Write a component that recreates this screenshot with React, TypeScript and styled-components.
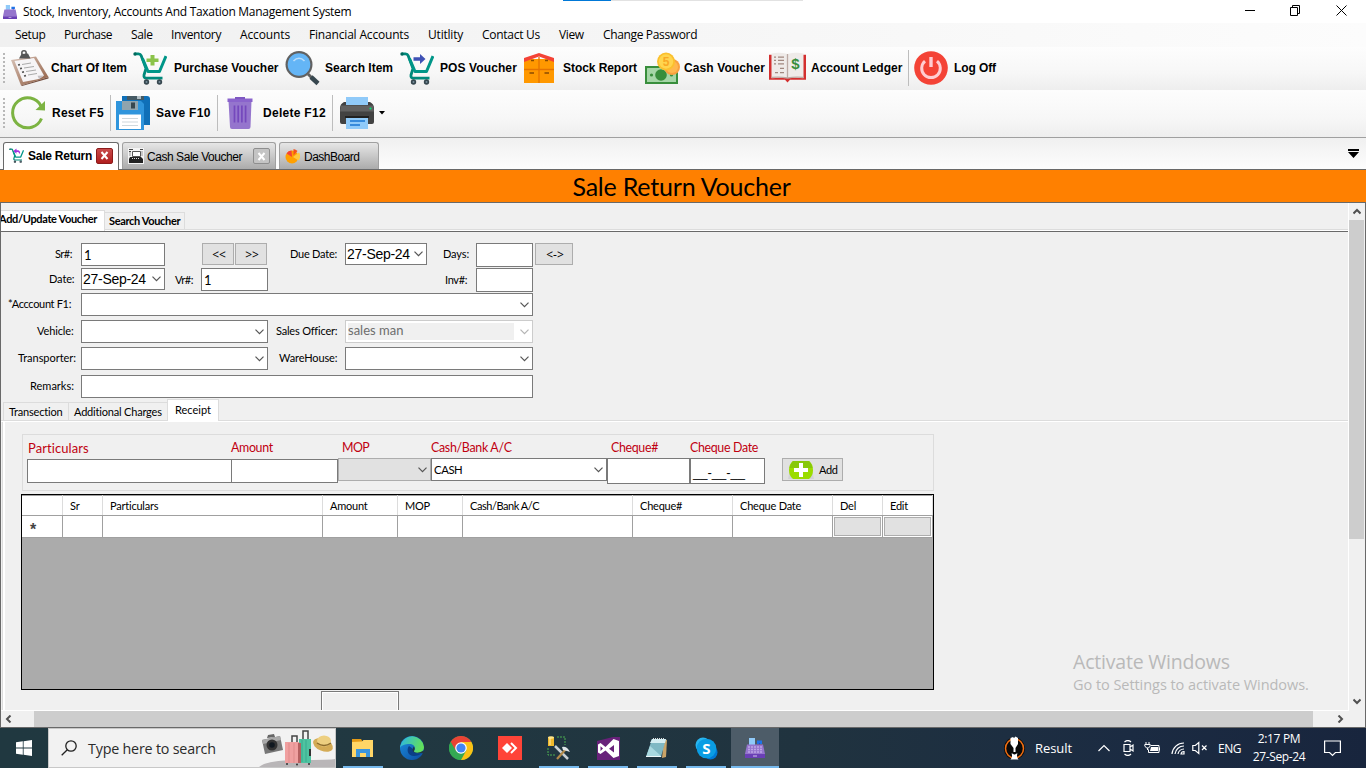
import React from 'react';
import styled, { createGlobalStyle, css } from 'styled-components';

const ui = '"Open Sans", "Noto Sans", sans-serif';
const sans = '"Liberation Sans", Arial, sans-serif';
const lato = 'Lato, "Open Sans", sans-serif';

const Global = createGlobalStyle`
  * { box-sizing: border-box; }
  html, body { margin: 0; padding: 0; }
  body { width: 1366px; height: 768px; overflow: hidden; background: #f0f0f0; color: #000; }
  svg { display: block; flex: none; }
`;

const Screen = styled.div`
  position: relative;
  display: flex;
  flex-direction: column;
  width: 1366px;
  height: 768px;
  overflow: hidden;
  background: #f0f0f0;
  font: 12px ${ui};
  white-space: nowrap;
`;

/* ---------- window frame ---------- */
const TitleBar = styled.header`
  position: relative;
  display: flex;
  align-items: center;
  height: 23px;
  padding-left: 3px;
  background: #fff;
  font-size: 12px;
  letter-spacing: -0.28px;
`;
const AppName = styled.span`
  flex: 1;
  margin-left: 6px;
  line-height: 23px;
`;
const TopLoader = styled.div`
  position: absolute;
  top: 0;
  left: 563px;
  width: 240px;
  height: 1px;
  background: linear-gradient(90deg, #0078d7 48px, #e2e2e2 48px);
`;
const WindowButtons = styled.div`
  display: flex;
  width: 128px;
  align-items: center;
  justify-content: space-between;
  padding: 0 19px 2px 7px;
`;
const MenuBar = styled.nav`
  display: flex;
  height: 24px;
  padding-left: 15px;
  background: linear-gradient(90deg, #f0f0f0, #fcfcfc);
`;
const MenuItem = styled.span<{ $w: number; $ls?: number }>`
  width: ${p => p.$w}px;
  line-height: 23px;
  letter-spacing: ${p => p.$ls ?? -0.35}px;
`;

/* ---------- toolbars ---------- */
const Toolbar = styled.div<{ $h: number }>`
  display: flex;
  align-items: center;
  height: ${p => p.$h}px;
  padding-left: 3px;
  padding-bottom: 1px;
  background: linear-gradient(#fdfdfd, #f7f7f7 60%, #eeeeee);
`;
const Grip = styled.div`
  width: 2px;
  height: 31px;
  margin-right: 6px;
  background: repeating-linear-gradient(#b8b8b8 0 2px, transparent 2px 4px);
`;
const ToolButton = styled.div<{ $w: number }>`
  display: flex;
  align-items: center;
  width: ${p => p.$w}px;
`;
const ToolIcon = styled.div<{ $w: number }>`
  width: ${p => p.$w}px;
`;
const ToolLabel = styled.span<{ $ls?: number }>`
  padding-bottom: 1px;
  font: 700 12px ${sans};
  letter-spacing: ${p => p.$ls ?? 0}px;
`;
const Separator = styled.i`
  width: 1px;
  height: 36px;
  margin-right: 5px;
  background: #bdbdbd;
`;

/* ---------- document tabs ---------- */
const DocTabs = styled.div`
  display: flex;
  align-items: flex-end;
  height: 33px;
  padding-left: 3px;
  gap: 3px;
  border-top: 1px solid #a0a0a0;
  border-bottom: 1px solid #696969;
  background: linear-gradient(#f0f0f0, #fdfdfd);
`;
const DocTab = styled.div<{ $w: number; $active?: boolean }>`
  display: flex;
  align-items: center;
  width: ${p => p.$w}px;
  height: 27px;
  padding: 0 5px 0 5px;
  border: 1px solid ${p => (p.$active ? '#696969' : '#a0a0a0')};
  border-bottom: 0;
  border-radius: 3px 3px 0 0;
  background: ${p => (p.$active ? '#fff' : 'linear-gradient(#e6e6e6, #ababab)')};
  ${p => p.$active && css`margin-bottom: -1px; height: 28px; padding-bottom: 2px;`}
`;
const DocTabName = styled.span<{ $bold?: boolean; $ls: number }>`
  flex: 1;
  margin-left: ${p => (p.$ls === -0.45 ? 3 : 4)}px;
  padding-top: 1px;
  font: ${p => (p.$bold ? 700 : 400)} 12px ${sans};
  letter-spacing: ${p => p.$ls}px;
`;
const TabClose = styled.span<{ $red?: boolean }>`
  display: flex;
  align-items: center;
  justify-content: center;
  width: 17px;
  height: 16px;
  border: 1px solid ${p => (p.$red ? '#8c1c1c' : '#8e8e8e')};
  border-radius: 2px;
  background: ${p => (p.$red ? 'linear-gradient(#c94b4b, #b01e1e)' : '#c4c4c4')};
`;
const TabMenu = styled.div`
  margin: 0 7px 11px auto;
`;
const Banner = styled.h1`
  height: 33px;
  margin: 0;
  border-bottom: 1px solid #696969;
  background: #ff8000;
  font: 400 25px/33px ${lato};
  letter-spacing: -0.21px;
  text-align: center;
  text-indent: -3px;
`;

/* ---------- scrolling work area ---------- */
const WorkArea = styled.div`
  display: flex;
  height: 525px;
  border: solid #696969;
  border-width: 0 1px 1px;
`;
const WorkColumn = styled.div`
  display: flex;
  flex: 1;
  flex-direction: column;
  min-width: 0;
`;
const Page = styled.div`
  height: 508px;
  overflow: hidden;
  border: solid #fff;
  border-width: 0 1px 1px 0;
`;
const ScrollDown = styled.div`
  display: flex;
  flex-direction: column;
  align-items: center;
  width: 16px;
  padding: 5px 1px 22px 0;
`;
const VThumb = styled.div`
  width: 15px;
  height: 319px;
  margin: 4px 0 auto;
  background: #cdcdcd;
`;
const ScrollAcross = styled.div`
  display: flex;
  align-items: center;
  height: 16px;
  padding: 0 5px 0 4px;
`;
const HThumb = styled.div`
  width: 1279px;
  height: 16px;
  margin: 0 auto 0 21px;
  background: #cdcdcd;
`;

const PageTabs = styled.div`
  display: flex;
  align-items: flex-end;
  height: 29px;
  border-bottom: 1px solid #696969;
  background: linear-gradient(transparent 26px, #dcdcdc 26px 27px, #fff 27px);
`;
const PageTab = styled.div<{ $active?: boolean }>`
  height: ${p => (p.$active ? 21 : 18)}px;
  width: ${p => (p.$active ? 104 : 80)}px;
  margin-bottom: ${p => (p.$active ? 0 : 1)}px;
  padding-left: ${p => (p.$active ? 0 : 4)}px;
  border: 1px solid #dcdcdc;
  border-left: 0;
  background: ${p => (p.$active ? '#fff' : '#f0f0f0')};
  border-bottom: ${p => (p.$active ? '0' : '1px solid #dcdcdc')};
  font: 700 11px/${p => (p.$active ? 16 : 16)}px ${lato};
  letter-spacing: -0.34px;
  text-indent: ${p => (p.$active ? -2 : 0)}px;
`;

const Form = styled.div`
  height: 166px;
  padding-top: 11px;
`;
const FormRow = styled.div<{ $h: number }>`
  display: flex;
  align-items: flex-start;
  height: ${p => p.$h}px;
`;
const Label = styled.label<{ $w: number; $ml: number; $ls?: number; $lh?: number }>`
  width: ${p => p.$w}px;
  margin-left: ${p => p.$ml}px;
  font: 11px/${p => p.$lh ?? 22}px ${lato};
  letter-spacing: ${p => p.$ls ?? -0.12}px;
`;
const Field = styled.div<{ $w: number; $h?: number; $disabled?: boolean }>`
  display: flex;
  flex: none;
  align-items: center;
  width: ${p => p.$w}px;
  height: ${p => p.$h ?? 23}px;
  padding: 0 3px 0 2px;
  border: 1px solid ${p => (p.$disabled ? '#cccccc' : '#7a7a7a')};
  background: #fff;
  font: 13px ${lato};
`;
const DateText = styled.span`
  flex: 1;
  margin-left: -1px;
  font: 14px ${sans};
  letter-spacing: -0.28px;
`;
const FieldText = styled.span`
  flex: 1;
`;
const DisabledText = styled.span`
  flex: 1;
  height: 17px;
  margin: 0 6px 0 0;
  background: #f0f0f0;
  color: #6d6d6d;
  line-height: 15px;
`;
const Button = styled.div<{ $w: number; $ml?: number }>`
  display: flex;
  align-items: center;
  justify-content: center;
  width: ${p => p.$w}px;
  height: 22px;
  margin-left: ${p => p.$ml ?? 0}px;
  border: 1px solid #adadad;
  background: #e1e1e1;
`;
const ArrowLabel = styled.span`
  padding: 1px 0 0 2px;
  font: 12px ${ui};
`;

const SubTabs = styled.div`
  display: flex;
  align-items: flex-end;
  height: 24px;
  padding-left: 2px;
  background: linear-gradient(transparent 22px, #dcdcdc 22px 23px, #fff 23px);
`;
const SubTab = styled.div<{ $w: number; $active?: boolean }>`
  width: ${p => p.$w}px;
  height: ${p => (p.$active ? 22 : 18)}px;
  margin-bottom: ${p => (p.$active ? 1 : 2)}px;
  padding-left: ${p => (p.$active ? 7 : 5)}px;
  border: 1px solid #dcdcdc;
  border-bottom: 0;
  border-right-width: ${p => (p.$active ? 1 : 0)}px;
  background: ${p => (p.$active ? '#fff' : '#f0f0f0')};
  font: 11px/${p => (p.$active ? 19 : 17)}px ${lato};
  letter-spacing: ${p => (p.$active ? 0 : -0.19)}px;
`;
const ReceiptPane = styled.div`
  height: 290px;
  margin-left: 1px;
  padding: 12px 0 0 17px;
  border-left: 1px solid #dcdcdc;
  box-shadow: inset 2px 0 #fff;
`;
const EntryBox = styled.div`
  display: flex;
  width: 912px;
  height: 57px;
  margin-left: 2px;
  padding-left: 4px;
  border: 1px solid #dcdcdc;
`;
const EntryColumn = styled.div<{ $w: number }>`
  width: ${p => p.$w}px;
`;
const EntryLabel = styled.div<{ $in?: number; $ls: number; $low?: boolean }>`
  height: ${p => (p.$low ? 24 : 23)}px;
  padding-left: ${p => p.$in ?? 0}px;
  color: #c00010;
  font: ${p => (p.$ls < 0 ? 12.4 : 13)}px/26px ${lato};
  letter-spacing: ${p => p.$ls}px;
`;
const MopSelect = styled(Field)`
  border-color: #adadad;
  background: #e1e1e1;
`;
const CashText = styled.span`
  flex: 1;
  font-size: 11.3px;
  letter-spacing: -0.4px;
  padding-bottom: 1px;
`;
const MaskText = styled.span`
  padding-top: 2px;
  font: 13px ${sans};
`;
const AddButton = styled(Button)`
  margin: 23px 0 0 17px;
  height: 23px;
  justify-content: flex-start;
  padding-left: 5px;
  gap: 5px;
  font: 11px ${lato};
  letter-spacing: -0.4px;
`;
const DataGrid = styled.div`
  width: 913px;
  height: 196px;
  margin: 3px 0 0 1px;
  border: 1px solid #000;
  background: #ababab;
`;
const GridRow = styled.div<{ $head?: boolean }>`
  display: grid;
  grid-template-columns: 41px 40px 220px 75px 65px 170px 100px 100px 50px 50px;
  grid-template-rows: 100%;
  height: ${p => (p.$head ? 21 : 22)}px;
  border-bottom: 1px solid #a0a0a0;
  background: #fff;
  ${p => p.$head && css`box-shadow: inset 0 1px #a0a0a0;`}
`;
const HeadCell = styled.div<{ $tight?: boolean }>`
  padding-left: 7px;
  border-right: 1px solid #dcdcdc;
  font: 11px/21px ${lato};
  letter-spacing: ${p => (p.$tight ? -0.45 : -0.22)}px;
`;
const Cell = styled.div`
  display: flex;
  padding: 1px;
  border-right: 1px solid #a0a0a0;
`;
const CellButton = styled.div`
  flex: 1;
  border: 1px solid #adadad;
  background: #e1e1e1;
`;
const NewRowMark = styled.span`
  padding: 4px 0 0 7px;
  font: 700 16px/18px ${sans};
  color: #444;
`;
const TotalBox = styled.div`
  width: 78px;
  height: 24px;
  margin: 1px 0 0 301px;
  border: 1px solid #7a7a7a;
  box-shadow: inset 0 0 0 1px #fff;
`;

/* ---------- watermark & taskbar ---------- */
const Watermark = styled.div`
  position: absolute;
  left: 1073px;
  top: 648px;
  color: #b9b9b9;
  font-family: ${ui};
`;
const WatermarkTitle = styled.div`
  font-size: 19.5px;
  line-height: 28px;
  letter-spacing: -0.2px;
`;
const WatermarkText = styled.div`
  font-size: 14.5px;
  line-height: 18px;
  letter-spacing: -0.05px;
`;
const Taskbar = styled.footer`
  display: flex;
  height: 40px;
  background: linear-gradient(90deg, #203840 0, #213841 400px, #20333f 800px, #1b2b42 1130px, #18253d);
  color: #fff;
`;
const StartButton = styled.div`
  display: flex;
  align-items: center;
  justify-content: center;
  width: 48px;
`;
const SearchBox = styled.div`
  display: flex;
  align-items: center;
  width: 288px;
  padding-left: 12px;
  border: 1px solid #c8c8c8;
  background: #f2f2f2;
  color: #2b2b2b;
  font-size: 14.3px;
  letter-spacing: -0.2px;
`;
const SearchHint = styled.span`
  flex: 1;
  margin-left: 11px;
`;
const TaskIcons = styled.div`
  display: flex;
  gap: 1px;
  margin-left: 3px;
`;
const TaskButton = styled.div<{ $open?: boolean; $active?: boolean }>`
  display: flex;
  align-items: center;
  justify-content: center;
  width: 48px;
  background-color: ${p => (p.$active ? '#4d5c68' : 'transparent')};
  background-image: ${p => (p.$open || p.$active ? 'linear-gradient(#76b9ed, #76b9ed)' : 'none')};
  background-repeat: no-repeat;
  background-position: center bottom;
  background-size: ${p => (p.$active ? '48px' : '40px')} 2px;
`;
const Tray = styled.div`
  display: flex;
  align-items: center;
  width: 362px;
  margin-left: auto;
`;
const TrayText = styled.span<{ $w: number; $ls?: number; $size?: number }>`
  width: ${p => p.$w}px;
  font-size: ${p => p.$size ?? 12}px;
  letter-spacing: ${p => p.$ls ?? -0.45}px;
`;
const TrayIcon = styled.span<{ $w: number }>`
  width: ${p => p.$w}px;
`;
const Clock = styled.div`
  width: 66px;
  margin-right: 12px;
  font-size: 12px;
  line-height: 18px;
  letter-spacing: -0.35px;
  text-align: center;
`;

/* ---------- icons ---------- */
const Chevron = ({ c = '#555' }: { c?: string }) => (
  <svg width="9" height="6" viewBox="0 0 9 6"><path d="M.5.7 4.500 4.700 8.500.7" fill="none" stroke={c} strokeWidth="1.200" /></svg>
);
const ScrollArrow = ({ d }: { d: string }) => (
  <svg width="8" height="8" viewBox="0 0 8 8"><path d={d} fill="none" stroke="#505050" strokeWidth="2" /></svg>
);
const Register = ({ s, keys = true }: { s: number; keys?: boolean }) => (
  <svg width={s} height={s} viewBox="0 0 20 20">
    <path d="M4 0h6v7H4z" fill="#90caf9" /><path d="M12 2.500h5v3.500h-5z" fill="#1e73e8" /><path d="M14 5.500h1V8h-1z" fill="#4527a0" />
    <path d="M2 6.500h16l2 9.500H0z" fill="#9575cd" /><path d="M0 16h20v4H0z" fill="#6a3fb5" />
    {keys && <path d="M3 9h14M3 11.500h14M3 14h14" stroke="#bda5e6" strokeWidth="1.300" strokeDasharray="2 1" />}
    <path d="M8 17.500h4v1H8z" fill="#d1c4e9" />
  </svg>
);
const Clipboard = () => (
  <svg width="38" height="36" viewBox="0 0 38 36">
    <defs><linearGradient id="wood" x1="0" y1="0" x2="1" y2="1"><stop offset="0" stopColor="#d8c3b8" /><stop offset="1" stopColor="#8f5b3f" /></linearGradient></defs>
    <path d="M0 10 25 6.500 37.500 27 10 35.500z" fill="url(#wood)" /><path d="M10 35.500 37.500 27v1.500L11 36z" fill="#765040" />
    <path d="M3.500 11 23 8 33 25.500 28 29 12 32z" fill="#f6f4f6" /><path d="M28 29 26.500 25.800 33 25.500z" fill="#c5c0c4" />
    <path d="M8 8.500 10.500 4 17 3.500 19.500 8.500z" fill="#555" /><circle cx="13" cy="3" r="2.200" fill="none" stroke="#555" strokeWidth="1.500" />
    <path d="m11 14.500 9-1.500M13 18l10-1.500M15 21.500l10-1.500M17 25l9-1.500" stroke="#aaa" strokeWidth="1" />
    <path d="m7 15 2-.4M9 18.600l2-.4M11 22.300l2-.4M13 26l2-.4" stroke="#555" strokeWidth="1.600" />
  </svg>
);
const Cart = ({ kind, s = 34 }: { kind: 'plus' | 'arrow' | 'return'; s?: number }) => (
  <svg width={s} height={s} viewBox="0 0 34 34">
    <path d="M2 2.800H5.500q2 0 2.600 1.700L13 17.500 11 24q-.5 3 2.500 3.200h16" fill="none" stroke="#00897b" strokeWidth="2.800" strokeLinejoin="round" />
    <path d="M9.500 7.500 15 20.500h11.500L33 5" fill="none" stroke="#009688" strokeWidth="3" strokeLinejoin="round" />
    <circle cx="2" cy="3" r="1.700" fill="#00695c" />
    <circle cx="13.500" cy="31" r="2.700" fill="#37474f" /><circle cx="26.500" cy="31" r="2.700" fill="#37474f" /><circle cx="13.500" cy="31" r="1" fill="#78909c" /><circle cx="26.500" cy="31" r="1" fill="#78909c" />
    {kind === 'plus' && <path d="M17.500 4h4v3.500h4v3.500h-4v3.500h-4V11h-4V7.500h4z" fill="#8bc34a" />}
    {kind === 'arrow' && <path d="M13.500 6.300h6.500V3l5.500 5-5.500 5V9.700h-6.500z" fill="#3f51b5" />}
    {kind === 'return' && <path d="M25 14c1-8-2-9-8-9V1l-7 6 7 6V9c4 0 5 0 8 5z" fill="#a030e0" />}
  </svg>
);
const Magnifier = () => (
  <svg width="36" height="36" viewBox="0 0 36 36">
    <path d="m23 24 4 4" stroke="#616161" strokeWidth="3" /><path d="m26 27 7 6.500" stroke="#37474f" strokeWidth="4.500" />
    <circle cx="14" cy="14.500" r="13.500" fill="#616161" /><circle cx="14" cy="14.500" r="11.300" fill="#64b5f6" /><path d="M8.500 11q5.500-5.500 11 0" fill="none" stroke="#bbdefb" strokeWidth="1.600" />
  </svg>
);
const Boxes = () => (
  <svg width="32" height="34" viewBox="0 0 32 34">
    <path d="M0 8h30v24H0z" fill="#ff9800" /><path d="M0 7 15 2l15 5v4L15 5.500 0 11z" fill="#f44336" />
    <path d="M15 6v26M0 18.500h30" stroke="#e57300" strokeWidth="1.300" /><path d="M5.500 22h4.500M20.500 22H25M7 9.500h3M21 9.500h3" stroke="#8a4b00" strokeWidth="1.500" />
  </svg>
);
const Money = () => (
  <svg width="37" height="34" viewBox="0 0 37 34">
    <path d="M1 15h33v18H1z" fill="#388e3c" /><path d="M3 17h29v14H3z" fill="#a5d6a7" /><path d="M1 15h5l-5 4zM34 33v-4l-4 4zM1 33v-4l4 4z" fill="#388e3c" />
    <circle cx="17" cy="24" r="5.800" fill="#388e3c" /><circle cx="7.500" cy="24" r="1.600" fill="#388e3c" /><circle cx="27.500" cy="24" r="1.600" fill="#388e3c" />
    <circle cx="28" cy="16" r="8" fill="#f9a03f" /><circle cx="28" cy="16" r="6" fill="#ffb74d" /><circle cx="22" cy="10.500" r="9" fill="#fbc02d" /><circle cx="22" cy="10.500" r="7.200" fill="#ffd54f" />
    <text x="22" y="14.700" fontFamily="Liberation Sans" fontWeight="700" fontSize="12" textAnchor="middle" fill="#f9a825">5</text>
  </svg>
);
const Ledger = () => (
  <svg width="38" height="32" viewBox="0 0 38 34" preserveAspectRatio="none">
    <path d="M0 3h37v26.500H21l-2.500 3-2.500-3H0z" fill="#d32f2f" /><path d="M2.500 1.500q8-1.500 16 .5 8-2 16-.5v26.300q-8-1-16 0-8-1-16 0z" fill="#efebe9" /><path d="M18.500 2v25.500M2.500 27q8-1 16 .5 8-1.500 16-.5" stroke="#bcaaa4" strokeWidth="1.300" fill="none" />
    <path d="M5 5.500h2M9 5.500h6M5 9h2M9 9h6M5 12.500h2M9 12.500h6M11 17.500h4M6 22h3M11 22h4" stroke="#a1887f" strokeWidth="1.300" />
    <text x="26.500" y="18" fontFamily="Liberation Sans" fontWeight="700" fontSize="15" textAnchor="middle" fill="#388e3c">$</text>
  </svg>
);
const Power = () => (
  <svg width="34" height="34" viewBox="0 0 34 34"><circle cx="17" cy="17" r="16.800" fill="#f44336" /><path d="M11 10.200a9.300 9.300 0 1 0 12 0" fill="none" stroke="#ffcdd2" strokeWidth="3" /><path d="M17 6v10" stroke="#ffcdd2" strokeWidth="3.400" /></svg>
);
const Reset = () => (
  <svg width="35" height="34" viewBox="0 0 35 34"><path d="M30 10A15 15 0 1 0 30.500 22.500" fill="none" stroke="#7cb342" strokeWidth="3" /><path d="m24.500 14 9.500.5V5z" fill="#7cb342" /></svg>
);
const Disks = () => (
  <svg width="34" height="34" viewBox="0 0 34 34">
    <path d="M6 0h25q3 0 3 3v26H6z" fill="#1070b8" /><path d="M11 0h17v4H11z" fill="#455a64" /><path d="M21 0h4v3h-4z" fill="#b0bec5" />
    <path d="M0 5h25l3 3v26H0z" fill="#2f95dc" /><path d="M6 5h16v9H6z" fill="#90a4ae" /><path d="M15 6.500h4v6h-4z" fill="#37474f" /><path d="M3 18.500h22V33H3z" fill="#fff" /><path d="M6 22.500h16M6 26h16M6 29.500h16" stroke="#cfd8dc" strokeWidth="1.200" />
  </svg>
);
const Trash = () => (
  <svg width="34" height="34" viewBox="0 0 34 34"><path d="M5.500 5h23L27.500 31q0 2-2 2H9q-2 0-2-2z" fill="#9575cd" /><path d="M4.500 2.500h25V6h-25z" fill="#8a63cc" /><path d="M12 1h10v2H12z" fill="#7e57c2" /><path d="M11.500 9.500v17M15.200 9.500v17M18.900 9.500v17M22.600 9.500v17" stroke="#7548bd" strokeWidth="1.700" /></svg>
);
const Printer = () => (
  <svg width="36" height="34" viewBox="0 0 36 34"><path d="M6 1h22v9H6z" fill="#90caf9" /><path d="M4 6h2v3h22V6h2q4 2 4 6v14q0 2-2 2H2q-2 0-2-2V12q0-4 4-6z" fill="#424242" /><path d="M1 9.500h32l1 6H0z" fill="#616161" /><path d="M5 20h24v2H5z" fill="#212121" /><path d="M6 22h22v11H6z" fill="#90caf9" /><path d="M10 25h15M10 29h10" stroke="#1976d2" strokeWidth="1.600" /><circle cx="30.500" cy="12.500" r="1.100" fill="#00e676" /></svg>
);
const CashRegister = () => (
  <svg width="16" height="16" viewBox="0 0 16 16"><path fill="#f4f4f4" d="M0 0h16v16H0z" /><path d="M1 1.500h4M12 1.500h3M1 3.500h2" stroke="#444" /><path d="M4.500 3.500h8v5h-8z" fill="#fff" stroke="#555" /><path d="M2 9h11l2 2v4H1v-4z" fill="#222" /><path d="M4 10.500h7" stroke="#ddd" strokeDasharray="1 1" /><path d="M2 4v4M14 3v5" stroke="#999" /></svg>
);
const Pie = () => (
  <svg width="15" height="15" viewBox="0 0 15 15"><circle cx="7" cy="8" r="6.500" fill="#ffa000" /><path d="M7 8 1.500 4.500A6.500 6.500 0 0 1 6.500 1.500z" fill="#f44336" /><path d="M8.500 6.500V0a6.500 6.500 0 0 1 4 2z" fill="#f4511e" /><path d="M8 8l6-4.500a7 7 0 0 1-.5 8z" fill="#ffc940" /></svg>
);
const Cross = () => (
  <svg width="9" height="9" viewBox="0 0 9 9"><path d="m1.500 1 6 7m0-7-6 7" stroke="#fff" strokeWidth="2" /></svg>
);
const PlusBadge = () => (
  <svg width="26" height="18" viewBox="0 0 26 18"><path fill="#d2d2d6" d="M0 18 4 0h18l4 18z" /><path d="M5 0h16q4 3 4 9t-4 9H5q-4-3-4-9t4-9z" fill="#9bdc00" /><path d="M5 0h16q3 3 3.500 7H1.500Q2 3 5 0z" fill="#87c80a" /><path d="M13 2v14M6 9h14" stroke="#fff" strokeWidth="4" /></svg>
);
const Luggage = () => (
  <svg width="76" height="38" viewBox="0 0 76 38">
    <path d="M0 38Q8 31 40 31t36-1v8z" fill="#b9b6b8" />
    <path d="m3 11 18-4 3 14-18 4z" fill="#777" /><path d="m3 11 18-4 1 4-18 4z" fill="#aaa" /><circle cx="13" cy="16" r="5.500" fill="#333" /><circle cx="13" cy="16" r="2.800" fill="#101820" /><path d="m8 9 1-3 6-1 1 3z" fill="#666" />
    <path d="M33 13V7h5v6M44 11V2h5v9" fill="none" stroke="#444" strokeWidth="1.500" />
    <path d="M40 10h12v24H40z" fill="#4fc3a1" /><path d="M43 11v22M47 11v22" stroke="#38ab8d" /><path d="M26 13h14v21H26z" fill="#f0a0a0" /><path d="M30 14v20M35 14v20" stroke="#e08b8b" /><path d="M39 14h3v20h-3z" fill="#b56060" /><path d="M51 20v7" stroke="#333" strokeWidth="2" />
    <ellipse cx="64" cy="16" rx="10.500" ry="6" transform="rotate(22 64 16)" fill="#d4ab55" /><ellipse cx="65" cy="12" rx="7" ry="5.500" fill="#edcf80" /><path d="M58 14q7 5 14 0" fill="none" stroke="#8b6b2c" strokeWidth="1.500" />
    <circle cx="28" cy="35" r="1" fill="#333" /><circle cx="38" cy="35.500" r="1" fill="#333" /><circle cx="50" cy="35" r="1" fill="#333" />
  </svg>
);
const Folder = () => (
  <svg width="22" height="20" viewBox="0 0 22 20"><path d="M0 1h9l2 3H0z" fill="#e59b17" /><path d="M0 4 10 3.500 11.500 2H21v17H0z" fill="#ffd667" /><path d="M4 11h14v8h-4v-4H8v4H4z" fill="#3a95dd" /></svg>
);
const Edge = () => (
  <svg width="24" height="24" viewBox="0 0 24 24">
    <defs><linearGradient id="sea" x1="0" y1="0" x2="1" y2=".3"><stop offset="0" stopColor="#2bb5e8" /><stop offset="1" stopColor="#62df5b" /></linearGradient><linearGradient id="deep" x1="0" y1="0" x2="1" y2="1"><stop offset="0" stopColor="#1b8fe0" /><stop offset="1" stopColor="#0c4a9e" /></linearGradient></defs>
    <circle cx="12" cy="12" r="12" fill="url(#deep)" /><path d="M.3 10A12 12 0 0 1 24 11c0 4-3 6-7 6-3 0-4-1.500-2.500-3 1.500-3-1-6-5-6S1 9 .3 12z" fill="url(#sea)" /><path d="M9 10c-3 4-1 10 5 10 3 0 6-1 8-3-3 1-9 1-9-4z" fill="#0b3f87" /><path d="M13.500 10.500c2 1.500 1 3.500.5 4.500-.5 1.500 4 3 9.500-.5l1 3-4-.5q-7 1-8-3z" fill="#213740" />
  </svg>
);
const Chrome = () => (
  <svg width="24" height="24" viewBox="0 0 24 24"><circle cx="12" cy="12" r="12" fill="#34a853" /><path d="M1.600 6A12 12 0 0 1 22.400 6H12v8z" fill="#ea4335" /><path d="M22.400 6A12 12 0 0 1 12 24l5.500-10L12 6z" fill="#fbc116" /><path d="M1.600 6 7 15l5-3z" fill="#ea4335" /><path d="m1.600 6 5.600 9.500L12 18l3-1-4 7A12 12 0 0 1 1.600 6z" fill="#34a853" /><circle cx="12" cy="12" r="5.800" fill="#fff" /><circle cx="12" cy="12" r="4.600" fill="#4285f4" /></svg>
);
const AnyDesk = () => (
  <svg width="24" height="24" viewBox="0 0 24 24"><path fill="#ff4438" d="M0 0h24v24H0z" /><path d="m9 7 5 5-5 5-5-5z" fill="#fff" /><path d="m13 7 5 5-5 5" fill="none" stroke="#fff" strokeWidth="2" /></svg>
);
const DbTools = () => (
  <svg width="24" height="24" viewBox="0 0 24 24"><path d="M1 1h6v9H1z" fill="#f0b92c" /><ellipse cx="4" cy="1.500" rx="3" ry="1.200" fill="#ffe58a" /><path d="M3 2v7" stroke="#ffeeb0" /><path d="M10 1h8v8M1 12v7h8" fill="none" stroke="#4caf50" strokeDasharray="2 1" /><path d="M8 10l13 13" stroke="#c9d0d6" strokeWidth="2.500" /><path d="m19 13-9 10" stroke="#b18a4a" strokeWidth="2.200" /><path d="M15 11q5-1 8 5l-3-1-4-1z" fill="#dfe5e8" /></svg>
);
const VisualStudio = () => (
  <svg width="23" height="23" viewBox="0 0 23 23"><path fill="#68217a" d="M0 4 16 0h7v23H0z" /><path fillRule="evenodd" d="M16.500 2 22 4v15l-5.500 2-8-7.500L3.500 17 1 15.500v-8L3.500 6l5 4zM17 8l-5 3.700 5 3.800zM3.500 9.300v4.600L6 11.600z" fill="#fff" /></svg>
);
const Notepad = () => (
  <svg width="24" height="24" viewBox="0 0 24 24"><path d="m19 3 3 1-1 17-4 1z" fill="#c9a468" /><path d="M7 3h14l-5 18H1z" fill="#7fb9c4" /><path d="M7 3h14l-1 4H5z" fill="#d4eef2" /><path d="M5 10 15 19l1 2H1z" fill="#a9d9e0" /><path d="M8 2.500h12" stroke="#ddd" strokeDasharray="1 1" strokeWidth="1" /><path d="M1 21h15l.3-1H1z" fill="#eef9fa" /></svg>
);
const Skype = () => (
  <svg width="23" height="23" viewBox="0 0 23 23"><circle cx="8" cy="8" r="7.500" fill="#29b6f0" /><circle cx="15.500" cy="15.500" r="7" fill="#0078d4" /><circle cx="11.500" cy="11.500" r="9.800" fill="#0a9de4" /><text x="11.500" y="17" fontSize="15" fontWeight="700" fontFamily="Open Sans" textAnchor="middle" fill="#fff">S</text></svg>
);
const Cricket = () => (
  <svg width="21" height="24" viewBox="0 0 21 24"><ellipse cx="10.500" cy="12.500" rx="10.500" ry="11" fill="#0a0a0a" /><ellipse cx="10.500" cy="12.500" rx="9" ry="9.700" fill="none" stroke="#f36f12" strokeWidth="1.500" /><path d="M6.500 2 9 1l1 1 1.500-1.500L14 2v6l-2.500 4v4h-2v-4L6.500 8z" fill="#fff" /><path d="M10 18.500q-1.500-1.500-2.500-1 1 2 0 4.500l-1 1.500h8l-1-1.500q-1-2.500 0-4.500-1-.5-2.500 1z" fill="#fff" /></svg>
);
const Line = ({ d, w, h = 16, sw = 1.2 }: { d: string; w: number; h?: number; sw?: number }) => (
  <svg width={w} height={h} viewBox={`0 0 ${w} ${h}`}><path d={d} fill="none" stroke="#fff" strokeWidth={sw} /></svg>
);
const Battery = () => (
  <svg width="17" height="14" viewBox="0 0 17 14"><path d="M7 4.500h8v7H4.500V8.500M15.500 6.500v3" fill="none" stroke="#fff" /><path d="M7 6h7v4H6z" fill="#fff" /><path d="M2 1v2M5 1v2M.8 3.500h5.400v1.500L4.500 7h-2L.8 5zM3.500 7v2" stroke="#fff" fill="none" /></svg>
);

/* ---------- data ---------- */
const menu: [string, number, number?][] = [['Setup', 49], ['Purchase', 67, -0.45], ['Sale', 40], ['Inventory', 69], ['Accounts', 69, -0.13], ['Financial Accounts', 119, -0.18], ['Utitlity', 54, -0.2], ['Contact Us', 77, -0.27], ['View', 44], ['Change Password', 100]];
const gridHeads = ['', 'Sr', 'Particulars', 'Amount', 'MOP', 'Cash/Bank A/C', 'Cheque#', 'Cheque Date', 'Del', 'Edit'];

function Tool({ w, slot, icon, name, ls }: { w: number; slot: number; icon: React.ReactNode; name: string; ls?: number }) {
  return <ToolButton $w={w}><ToolIcon $w={slot}>{icon}</ToolIcon><ToolLabel $ls={ls}>{name}</ToolLabel></ToolButton>;
}
function Select({ w, text }: { w: number; text?: string }) {
  return <Field $w={w}><FieldText>{text}</FieldText><Chevron /></Field>;
}
function DatePick({ w }: { w: number }) {
  return <Field $w={w} $h={22}><DateText>27-Sep-24</DateText><Chevron /></Field>;
}

export default function App() {
  return (
    <Screen>
      <Global />
      <TitleBar>
        <TopLoader />
        <Register s={14} keys={false} />
        <AppName>Stock, Inventory, Accounts And Taxation Management System</AppName>
        <WindowButtons>
          <svg width="10" height="11"><path d="M0 5.500h10" stroke="#000" /></svg>
          <svg width="11" height="11"><path d="M.5 2.500h7v8h-7zM2.500 2V.5h7v8H8" fill="none" stroke="#000" /></svg>
          <svg width="11" height="11"><path d="m.5.5 10 10m0-10-10 10" stroke="#000" /></svg>
        </WindowButtons>
      </TitleBar>
      <MenuBar>{menu.map(([t, w, ls]) => <MenuItem key={t} $w={w} $ls={ls}>{t}</MenuItem>)}</MenuBar>

      <Toolbar $h={43}>
        <Grip />
        <Tool w={122} slot={40} icon={<Clipboard />} name="Chart Of Item" />
        <Tool w={152} slot={41} icon={<Cart kind="plus" />} name="Purchase Voucher" />
        <Tool w={115} slot={40} icon={<Magnifier />} name="Search Item" />
        <Tool w={124} slot={40} icon={<Cart kind="arrow" />} name="POS Voucher" ls={0.1} />
        <Tool w={120} slot={39} icon={<Boxes />} name="Stock Report" ls={-0.06} />
        <Tool w={125} slot={40} icon={<Money />} name="Cash Voucher" ls={0.1} />
        <Tool w={139} slot={42} icon={<Ledger />} name="Account Ledger" />
        <Separator />
        <Tool w={90} slot={40} icon={<Power />} name="Log Off" ls={-0.09} />
      </Toolbar>
      <Toolbar $h={47}>
        <Grip />
        <Tool w={99} slot={41} icon={<Reset />} name="Reset F5" ls={0.22} />
        <Separator />
        <Tool w={101} slot={40} icon={<Disks />} name="Save F10" ls={0.35} />
        <Separator />
        <Tool w={109} slot={40} icon={<Trash />} name="Delete F12" ls={0.28} />
        <Separator />
        <ToolButton $w={50}>
          <ToolIcon $w={41}><svg width="38" height="34"><g transform="translate(2 0)"><Printer /></g></svg></ToolIcon>
          <svg width="6" height="4"><path d="M0 0h6L3 3.500z" /></svg>
        </ToolButton>
      </Toolbar>

      <DocTabs>
        <DocTab $w={116} $active>
          <Cart kind="return" s={15} />
          <DocTabName $bold $ls={-0.24}>Sale Return</DocTabName>
          <TabClose $red><Cross /></TabClose>
        </DocTab>
        <DocTab $w={154}>
          <CashRegister />
          <DocTabName $ls={-0.45}>Cash Sale Voucher</DocTabName>
          <TabClose><Cross /></TabClose>
        </DocTab>
        <DocTab $w={100}>
          <Pie />
          <DocTabName $ls={-0.5}>DashBoard</DocTabName>
        </DocTab>
        <TabMenu><svg width="11" height="9"><path d="M0 0h11v2H0zM0 3h11L5.500 9z" /></svg></TabMenu>
      </DocTabs>
      <Banner>Sale Return Voucher</Banner>

      <WorkArea>
        <WorkColumn>
          <Page>
            <PageTabs>
              <PageTab $active>Add/Update Voucher</PageTab>
              <PageTab>Search Voucher</PageTab>
            </PageTabs>
            <Form>
              <FormRow $h={25}>
                <Label $ml={54} $w={26} $ls={-0.5}>Sr#:</Label><Field $w={84}><FieldText>1</FieldText></Field>
                <Button $ml={37} $w={32}><ArrowLabel>&lt;&lt;</ArrowLabel></Button>
                <Button $ml={1} $w={32}><ArrowLabel>&gt;&gt;</ArrowLabel></Button>
                <Label $ml={23} $w={55} $ls={-0.24}>Due Date:</Label><DatePick w={82} />
                <Label $ml={16} $w={33} $lh={21}>Days:</Label><Field $w={57} $h={24} />
                <Button $ml={2} $w={38}><ArrowLabel>&lt;-&gt;</ArrowLabel></Button>
              </FormRow>
              <FormRow $h={25}>
                <Label $ml={48} $w={32}>Date:</Label><DatePick w={84} />
                <Label $ml={10} $w={26} $ls={-0.5} $lh={23}>Vr#:</Label><Field $w={67}><FieldText>1</FieldText></Field>
                <Label $ml={177} $w={31} $ls={-0.35} $lh={23}>Inv#:</Label><Field $w={57} $h={24} />
              </FormRow>
              <FormRow $h={27}>
                <Label $ml={7} $w={73} $ls={-0.33} $lh={21}>*Acccount F1:</Label><Select w={452} />
              </FormRow>
              <FormRow $h={27}>
                <Label $ml={36} $w={44}>Vehicle:</Label><Select w={187} />
                <Label $ml={8} $w={69} $ls={-0.2}>Sales Officer:</Label>
                <Field $w={188} $disabled><DisabledText>sales man</DisabledText><Chevron c="#b4b4b4" /></Field>
              </FormRow>
              <FormRow $h={28}>
                <Label $ml={17} $w={63} $ls={-0.04}>Transporter:</Label><Select w={187} />
                <Label $ml={11} $w={66}>WareHouse:</Label><Select w={188} />
              </FormRow>
              <FormRow $h={23}>
                <Label $ml={29} $w={51} $ls={0}>Remarks:</Label><Field $w={452} />
              </FormRow>
            </Form>
            <SubTabs>
              <SubTab $w={65}>Transection</SubTab>
              <SubTab $w={99}>Additional Charges</SubTab>
              <SubTab $w={52} $active>Receipt</SubTab>
            </SubTabs>
            <ReceiptPane>
              <EntryBox>
                <EntryColumn $w={204}><EntryLabel $low $in={1} $ls={0.08}>Particulars</EntryLabel><Field $w={205} $h={24} /></EntryColumn>
                <EntryColumn $w={107}><EntryLabel $low $ls={-0.32}>Amount</EntryLabel><Field $w={107} $h={24} /></EntryColumn>
                <EntryColumn $w={93}><EntryLabel $in={4} $ls={-0.6}>MOP</EntryLabel><MopSelect $w={93}><FieldText /><Chevron /></MopSelect></EntryColumn>
                <EntryColumn $w={176}><EntryLabel $ls={-0.3}>Cash/Bank A/C</EntryLabel><Field $w={176}><CashText>CASH</CashText><Chevron /></Field></EntryColumn>
                <EntryColumn $w={83}><EntryLabel $in={4} $ls={-0.33}>Cheque#</EntryLabel><Field $w={83} $h={26} /></EntryColumn>
                <EntryColumn $w={75}><EntryLabel $ls={-0.33}>Cheque Date</EntryLabel><Field $w={75} $h={26}><MaskText>__-__-__</MaskText></Field></EntryColumn>
                <AddButton $w={61}><PlusBadge />Add</AddButton>
              </EntryBox>
              <DataGrid>
                <GridRow $head>{gridHeads.map((h, i) => <HeadCell key={i} $tight={i === 5}>{h}</HeadCell>)}</GridRow>
                <GridRow>
                  {gridHeads.map((h, i) => (
                    <Cell key={i}>{i === 0 && <NewRowMark>*</NewRowMark>}{i > 7 && <CellButton />}</Cell>
                  ))}
                </GridRow>
              </DataGrid>
              <TotalBox />
            </ReceiptPane>
          </Page>
          <ScrollAcross>
            <ScrollArrow d="M5.500.5 2 4l3.500 3.500" />
            <HThumb />
            <ScrollArrow d="M2.500.5 6 4 2.500 7.500" />
          </ScrollAcross>
        </WorkColumn>
        <ScrollDown>
          <ScrollArrow d="M.5 5.500 4 2l3.500 3.500" />
          <VThumb />
          <ScrollArrow d="M.5 2.500 4 6l3.500-3.500" />
        </ScrollDown>
      </WorkArea>

      <Taskbar>
        <StartButton>
          <svg width="16" height="16"><path d="M0 2.300 6.800 1.300V7.600H0zM7.600 1.200 16 0v7.600H7.600zM0 8.400h6.800v6.300L0 13.700zM7.600 8.400H16V16l-8.400-1.200z" fill="#fff" /></svg>
        </StartButton>
        <SearchBox>
          <svg width="16" height="16"><circle cx="10" cy="6" r="5.200" fill="none" stroke="#222" strokeWidth="1.300" /><path d="M6.300 9.700.7 15.300" stroke="#222" strokeWidth="1.300" /></svg>
          <SearchHint>Type here to search</SearchHint>
          <Luggage />
        </SearchBox>
        <TaskIcons>
          <TaskButton $open><Folder /></TaskButton>
          <TaskButton><Edge /></TaskButton>
          <TaskButton><Chrome /></TaskButton>
          <TaskButton><AnyDesk /></TaskButton>
          <TaskButton $open><DbTools /></TaskButton>
          <TaskButton $open><VisualStudio /></TaskButton>
          <TaskButton $open><Notepad /></TaskButton>
          <TaskButton $open><Skype /></TaskButton>
          <TaskButton $active><Register s={20} /></TaskButton>
        </TaskIcons>
        <Tray>
          <TrayIcon $w={31}><Cricket /></TrayIcon>
          <TrayText $w={63} $ls={-0.05} $size={13}>Result</TrayText>
          <TrayIcon $w={24}><Line w={12} d="M.5 11 6 5.500l5.500 5.500" /></TrayIcon>
          <TrayIcon $w={22}><Line w={12} d="M2 4.500h6v7H2zM8 7l3-2v6L8 9M2.500 2Q6-1 9 2M2.500 14q3.500 3 6.500 0" /></TrayIcon>
          <TrayIcon $w={27}><Battery /></TrayIcon>
          <TrayIcon $w={21}><Line w={14} d="M1 14A12 12 0 0 1 13 3M4 14a9 9 0 0 1 9-8M7 14a6 6 0 0 1 6-5M10 14a3 3 0 0 1 3-2.500v2.500z" /></TrayIcon>
          <TrayIcon $w={26}><Line w={16} d="M.8 5.500h2.500l3.500-3v11l-3.500-3H.8zM10 5.500l4.500 4.500m0-4.500L10 10" /></TrayIcon>
          <TrayText $w={28}>ENG</TrayText>
          <Clock>2:17 PM<br />27-Sep-24</Clock>
          <TrayIcon $w={36}><svg width="17" height="17" viewBox="0 0 17 17"><path d="M.6 1h15.800v11.500h-5l-2.900 3-2.900-3h-5z" fill="none" stroke="#fff" strokeWidth="1.200" /></svg></TrayIcon>
        </Tray>
      </Taskbar>
      <Watermark>
        <WatermarkTitle>Activate Windows</WatermarkTitle>
        <WatermarkText>Go to Settings to activate Windows.</WatermarkText>
      </Watermark>
    </Screen>
  );
}
